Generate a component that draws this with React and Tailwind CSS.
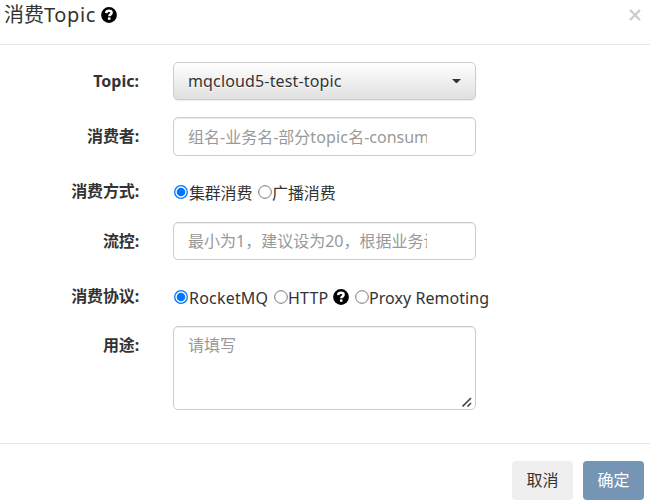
import React from "react";

const field =
  "w-[303px] rounded-[5px] border border-[#ccc] bg-white px-[14px] shadow-[inset_0_1px_1px_rgba(0,0,0,0.075)]";

function HelpIcon({ className = "" }) {
  return (
    <svg viewBox="0 0 16 16" className={"h-4 w-4 shrink-0 " + className}>
      <circle cx="8" cy="8" r="7.9" fill="#000" />
      <path
        d="M5.1 6.1C5.3 4.4 6.4 3.8 8 3.8c1.6 0 2.6.7 2.6 2 0 1.9-2.3 1.7-2.3 3.4"
        fill="none"
        stroke="#fff"
        strokeWidth="2.5"
      />
      <rect x="6.9" y="10.4" width="2.6" height="2.4" fill="#fff" />
    </svg>
  );
}

function Radio({ checked }) {
  return (
    <svg viewBox="0 0 14 14" className="h-[14px] w-[14px] shrink-0">
      <circle
        cx="7"
        cy="7"
        r="6.3"
        fill="#fff"
        stroke={checked ? "#0075ff" : "#767676"}
        strokeWidth={checked ? 1.3 : 1}
      />
      {checked && <circle cx="7" cy="7" r="4.3" fill="#0075ff" />}
    </svg>
  );
}

function Row({ label, className, labelClass = "", children }) {
  return (
    <div className={"flex " + className}>
      <div className={"w-[139px] shrink-0 text-right font-bold leading-6 " + labelClass}>{label}</div>
      <div className="ml-[34px] flex">{children}</div>
    </div>
  );
}

export default function App() {
  return (
    <div className="flex h-[504px] w-[650px] flex-col overflow-hidden bg-white font-['Noto_Sans','Noto_Sans_CJK_SC',sans-serif] text-[16px] text-[#333]">
      <header className="flex h-[45px] shrink-0 items-start border-b border-[#e5e5e5] pl-[4px] pr-[9px]">
        <h3 className="w-[97px] whitespace-nowrap text-[20px] leading-[30px]">
          消费<span className="tracking-[0.6px]">Topic</span>
        </h3>
        <HelpIcon className="mt-[7px]" />
        <svg viewBox="0 0 12 12" className="ml-auto mt-[9px] h-3 w-3">
          <path d="M1 1l10 10M11 1L1 11" stroke="#ccc" strokeWidth="2.4" />
        </svg>
      </header>

      <main className="flex h-[398px] shrink-0 flex-col pt-[17px]">
        <Row label="Topic:" className="h-[55px]" labelClass="pt-[7px]">
          <div className="flex h-[38px] w-[303px] items-center justify-between rounded-[5px] border border-[#ccc] bg-linear-to-b from-white to-[#e0e0e0] pl-[14px] pr-[14px] shadow-[0_1px_1px_rgba(0,0,0,0.075)]">
            <span className="tracking-[0.15px] [text-shadow:0_1px_0_#fff]">mqcloud5-test-topic</span>
            <svg viewBox="0 0 9 4" className="h-[4px] w-[9px]">
              <path d="M0 0h9L4.5 4.5z" fill="#333" />
            </svg>
          </div>
        </Row>
        <Row label="消费者:" className="h-[56px]" labelClass="pt-[7px] tracking-[-0.15px]">
          <div className={"flex h-[39px] items-center text-[#999] " + field}>
            <span className="w-[239px] overflow-hidden whitespace-nowrap">
              组名-业务名-部分<span className="tracking-[0.15px]">topic</span>名-consumer
            </span>
          </div>
        </Row>
        <Row label="消费方式:" className="h-[49px]" labelClass="pt-[6px] tracking-[-0.15px]">
          <div className="flex h-6 items-center pl-[1px] pt-[14px]">
            <Radio checked />
            <span className="w-[70px] whitespace-nowrap pl-[1px] pt-[1px] tracking-[-0.2px]">集群消费</span>
            <Radio />
            <span className="whitespace-nowrap pt-[1px] tracking-[-0.1px]">广播消费</span>
          </div>
        </Row>
        <Row label="流控:" className="h-[55px]" labelClass="pt-[7px] tracking-[-0.15px]">
          <div className={"flex h-[38px] items-center text-[#999] " + field}>
            <span className="w-[239px] overflow-hidden whitespace-nowrap">最小为1，建议设为20，根据业务设置</span>
          </div>
        </Row>
        <Row label="消费协议:" className="h-[49px]" labelClass="pt-[7px] tracking-[-0.15px]">
          <div className="flex h-6 items-center pl-[1px] pt-[15px]">
            <Radio checked />
            <span className="w-[86px] whitespace-nowrap pl-[1px] pt-[2px] tracking-[0.2px]">RocketMQ</span>
            <Radio />
            <span className="w-[45px] whitespace-nowrap pt-[2px] tracking-[0.2px]">HTTP</span>
            <HelpIcon />
            <span className="w-[6px]" />
            <Radio />
            <span className="whitespace-nowrap pt-[2px] tracking-[0.05px]">Proxy Remoting</span>
          </div>
        </Row>
        <Row label="用途:" className="h-[84px]" labelClass="pt-[7px] tracking-[-0.15px]">
          <div className={"flex h-[84px] justify-between pr-[3px] pt-[6px] text-[#999] " + field}>
            <span className="leading-6">请填写</span>
            <svg viewBox="0 0 10 10" className="mb-[2px] h-[10px] w-[10px] self-end">
              <path d="M0.5 9.5l8.5-8.5M5.5 9.5l3.5-3.5" stroke="#444" strokeWidth="1.6" fill="none" />
            </svg>
          </div>
        </Row>
      </main>

      <footer className="flex h-[61px] shrink-0 justify-end gap-[10px] border-t border-[#e5e5e5] pr-[6px] pt-[17px]">
        <button className="h-[39px] w-[61px] rounded-[4px] bg-[#efefef] pb-[1px] text-[#333]">取消</button>
        <button className="h-[39px] w-[61px] rounded-[4px] bg-[#7495b4] pb-[1px] text-white">确定</button>
      </footer>
    </div>
  );
}
